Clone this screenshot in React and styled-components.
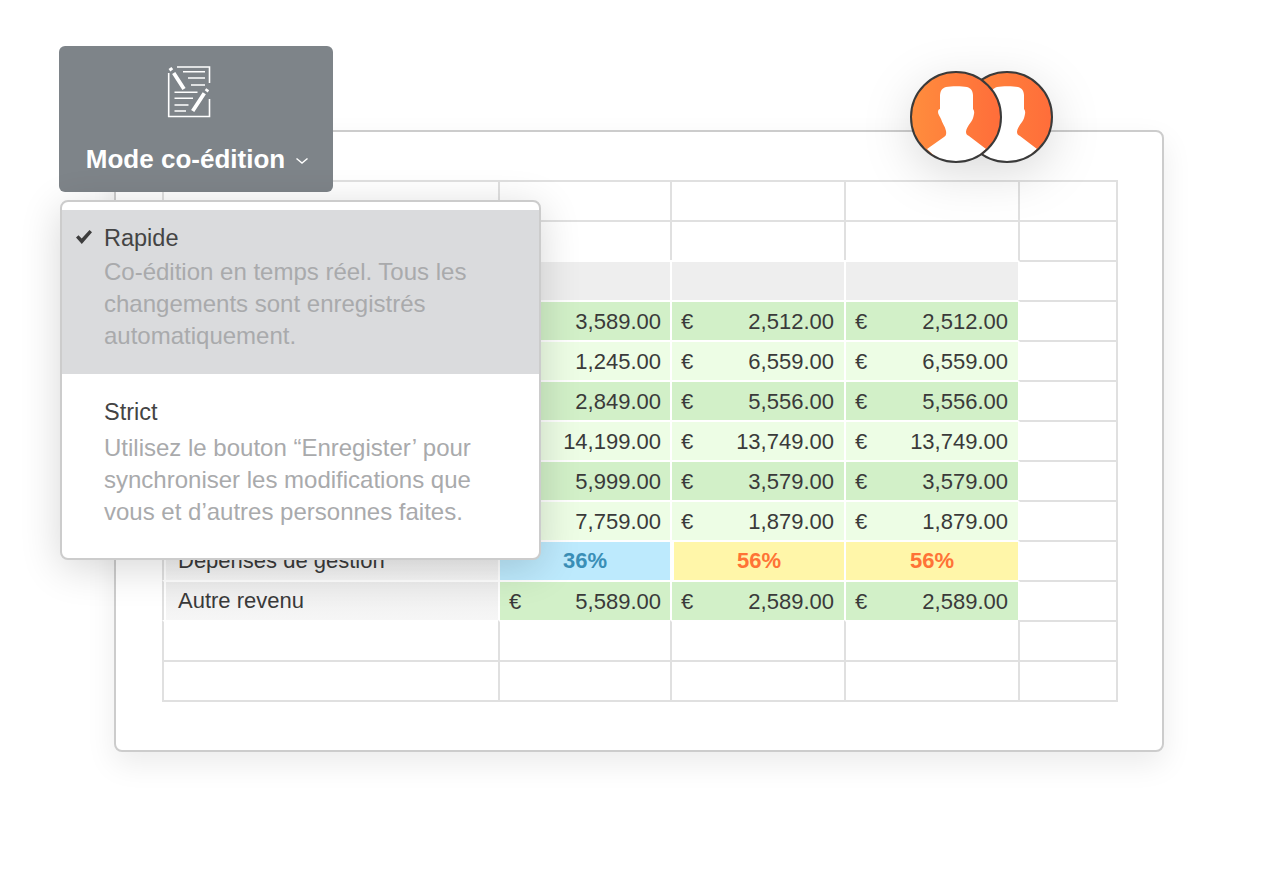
import React from 'react';
import styled, { createGlobalStyle } from 'styled-components';

const GlobalStyle = createGlobalStyle`
  html, body {
    margin: 0;
    padding: 0;
    background: #fff;
    font-family: 'Liberation Sans', Arial, sans-serif;
  }
`;

const Stage = styled.div`
  position: relative;
  width: 1280px;
  height: 880px;
  padding: 130px 0 0 114px;
  box-sizing: border-box;
  overflow: hidden;
`;

const SheetCard = styled.div`
  width: 1050px;
  height: 622px;
  padding: 48px 46px;
  box-sizing: border-box;
  background: #fff;
  border: 2px solid #ccc;
  border-radius: 8px;
  box-shadow: 0 12px 30px rgba(0, 0, 0, 0.08);
`;

const Grid = styled.div`
  display: grid;
  grid-template-columns: 336px 172px 174px 174px 98px;
  grid-auto-rows: 40px;
  width: 956px;
  box-sizing: border-box;
  border-right: 2px solid #e0e0e0;
  border-bottom: 2px solid #e0e0e0;
`;

const fills = {
  plain: '#fff',
  head: '#eee',
  dark: '#d2f0c8',
  light: '#edfde5',
  blue: '#bdeafd',
  yellow: '#fff6a9',
};

const Cell = styled.div`
  display: flex;
  align-items: center;
  box-sizing: border-box;
  min-width: 0;
  background: ${(p) => fills[p.$fill || 'plain']};
  background-clip: padding-box;
  border-top: 2px solid ${(p) => (p.$topWhite ? '#fff' : '#e0e0e0')};
  border-left: ${(p) => p.$leftWidth || 2}px solid ${(p) => (p.$leftWhite ? '#fff' : '#e0e0e0')};
  color: #3a3a3a;
  font-size: 22px;
  white-space: nowrap;
`;

const LabelCell = styled(Cell)`
  padding-left: 14px;
  background: linear-gradient(#ededed, #f6f6f6);
  background-clip: padding-box;
  box-shadow: inset 2px 0 0 #fff;
`;

const MoneyCell = styled(Cell)`
  justify-content: space-between;
  padding: 2px ${(p) => p.$right}px 0 9px;
`;

const PercentCell = styled(Cell)`
  justify-content: center;
`;

const Percent = styled.span`
  font-weight: 700;
  color: ${(p) => p.$color};
`;

const ToolButton = styled.div`
  position: absolute;
  left: 59px;
  top: 46px;
  width: 274px;
  height: 146px;
  display: flex;
  flex-direction: column;
  align-items: center;
  padding-top: 19px;
  box-sizing: border-box;
  background: #7e8489;
  border-radius: 6px;
  color: #fff;
`;

const ToolIcon = styled.svg`
  margin-right: 15px;
`;

const ToolLabel = styled.div`
  display: flex;
  align-items: center;
  gap: 11px;
  margin-top: 24px;
  padding-left: 2px;
  font-size: 26px;
  line-height: 32px;
  font-weight: 700;
`;

const Chevron = styled.svg`
  margin-top: 4px;
`;

const Menu = styled.div`
  position: absolute;
  left: 60px;
  top: 200px;
  width: 481px;
  height: 360px;
  padding-top: 8px;
  box-sizing: border-box;
  background: #fff;
  border: 2px solid #ccc;
  border-radius: 8px;
  box-shadow: 0 8px 40px rgba(0, 0, 0, 0.16);
`;

const MenuItem = styled.div`
  position: relative;
  padding: ${(p) => (p.$selected ? '12px 50px 22px 42px' : '22px 50px 0 42px')};
  background: ${(p) => (p.$selected ? '#dadbdd' : 'transparent')};
`;

const ItemTitle = styled.div`
  font-size: 23.5px;
  line-height: 32px;
  color: #444;
`;

const ItemText = styled.div`
  margin-top: ${(p) => p.$gap}px;
  font-size: 24px;
  line-height: 32px;
  color: #a9aaac;
`;

const Check = styled.svg`
  position: absolute;
  left: 14px;
  top: 20px;
`;

const Avatars = styled.div`
  position: absolute;
  left: 910px;
  top: 71px;
  width: 143px;
  height: 92px;
  filter: drop-shadow(0 12px 24px rgba(0, 0, 0, 0.14));
`;

const Avatar = styled.svg`
  position: absolute;
  top: 0;
  left: ${(p) => p.$left}px;
`;

const rows = [
  ['3,589.00', '2,512.00', '2,512.00', 'dark'],
  ['1,245.00', '6,559.00', '6,559.00', 'light'],
  ['2,849.00', '5,556.00', '5,556.00', 'dark'],
  ['14,199.00', '13,749.00', '13,749.00', 'light'],
  ['5,999.00', '3,579.00', '3,579.00', 'dark'],
  ['7,759.00', '1,879.00', '1,879.00', 'light'],
];

function EmptyRow({ topWhite }) {
  return (
    <>
      <Cell $topWhite={topWhite} />
      <Cell $topWhite={topWhite} />
      <Cell $topWhite={topWhite} />
      <Cell $topWhite={topWhite} />
      <Cell />
    </>
  );
}

function Money({ value, fill, right = 10 }) {
  return (
    <MoneyCell $fill={fill} $right={right} $topWhite $leftWhite>
      <span>€</span>
      <span>{value}</span>
    </MoneyCell>
  );
}

function NoteIcon() {
  return (
    <ToolIcon width="44" height="54" viewBox="0 0 44 54" fill="none" stroke="#fff">
      <g strokeWidth="1.6">
        <path d="M10 2H42.5V18M42.5 34V51.5H1.7V8" />
        <path d="M16 6.7H38M21 13H38M24 20H38M7.5 27.3H30.5M7.5 33.3H26M7.5 40H21.5M7.5 46H19" />
      </g>
      <path d="M6.7 8L17 24M25.7 46L37.3 28.3" strokeWidth="3.8" />
      <path d="M3 3L4.8 5.4M40.7 24.3L39.2 26.4" strokeWidth="3.6" />
    </ToolIcon>
  );
}

function Person({ left, from, to, id }) {
  return (
    <Avatar $left={left} width="92" height="92" viewBox="0 0 92 92">
      <defs>
        <linearGradient id={id} x1="0" x2="1" y1="0" y2="0">
          <stop offset="0" stopColor={from} />
          <stop offset="1" stopColor={to} />
        </linearGradient>
        <clipPath id={`${id}-clip`}>
          <circle cx="46" cy="46" r="45" />
        </clipPath>
      </defs>
      <circle cx="46" cy="46" r="45" fill={`url(#${id})`} />
      <path
        clipPath={`url(#${id}-clip)`}
        fill="#fff"
        d="M36 16C41 15 52 15 57 16C61 17 63 20 63 25V38C64 39 64.5 41 64 43C63.5 46 63 48 61 51C58 55 56 58 56 61C56 63 57 64 59 65L76 78L60 92H32L17 78L34 66C36 65 36.500 63 36 60C35 55 32 52 31 48C30 46 28 43 28 41C28 39 29 38 30 38V25C30 20 32 17 36 16Z"
      />
      <circle cx="46" cy="46" r="45" fill="none" stroke="#3a3a3a" strokeWidth="2" />
    </Avatar>
  );
}

export default function App() {
  return (
    <Stage>
      <GlobalStyle />
      <SheetCard>
        <Grid>
          <EmptyRow />
          <EmptyRow />
          <Cell $topWhite />
          <Cell $fill="head" $topWhite $leftWhite />
          <Cell $fill="head" $topWhite $leftWhite />
          <Cell $fill="head" $topWhite $leftWhite />
          <Cell $leftWhite />
          {rows.map((r) => (
            <React.Fragment key={r[0]}>
              <Cell $topWhite />
              <Money value={r[0]} fill={r[3]} right={9} />
              <Money value={r[1]} fill={r[3]} />
              <Money value={r[2]} fill={r[3]} />
              <Cell $leftWhite />
            </React.Fragment>
          ))}
          <LabelCell $topWhite>Dépenses de gestion</LabelCell>
          <PercentCell $fill="blue" $topWhite $leftWhite>
            <Percent $color="#3a8fb7">36%</Percent>
          </PercentCell>
          <PercentCell $fill="yellow" $topWhite $leftWhite $leftWidth={4}>
            <Percent $color="#ff7336">56%</Percent>
          </PercentCell>
          <PercentCell $fill="yellow" $topWhite $leftWhite>
            <Percent $color="#ff7336">56%</Percent>
          </PercentCell>
          <Cell $leftWhite />
          <LabelCell $topWhite>Autre revenu</LabelCell>
          <Money value="5,589.00" fill="dark" right={9} />
          <Money value="2,589.00" fill="dark" />
          <Money value="2,589.00" fill="dark" />
          <Cell $leftWhite />
          <EmptyRow topWhite />
          <EmptyRow />
        </Grid>
      </SheetCard>

      <Avatars>
        <Person left={51} from="#ff8a3c" to="#ff6d3a" id="back" />
        <Person left={0} from="#ff8d3d" to="#ff6d3a" id="front" />
      </Avatars>

      <ToolButton>
        <NoteIcon />
        <ToolLabel>
          Mode co-édition
          <Chevron width="12" height="6" viewBox="0 0 12 6" fill="none" stroke="#fff" strokeWidth="1.4">
            <path d="M0.5 0.5L6 5L11.500 0.5" />
          </Chevron>
        </ToolLabel>
      </ToolButton>

      <Menu>
        <MenuItem $selected>
          <Check width="16" height="14" viewBox="0 0 16 14">
            <path fill="#3d3d3d" d="M0 7.500L2.500 5.200L5.700 8.400L13.500 0L16 2.300L5.800 14Z" />
          </Check>
          <ItemTitle>Rapide</ItemTitle>
          <ItemText $gap={2}>
            Co-édition en temps réel. Tous les changements sont enregistrés automatiquement.
          </ItemText>
        </MenuItem>
        <MenuItem>
          <ItemTitle>Strict</ItemTitle>
          <ItemText $gap={4}>
            Utilisez le bouton “Enregister’ pour synchroniser les modifications que vous et d’autres personnes faites.
          </ItemText>
        </MenuItem>
      </Menu>
    </Stage>
  );
}
